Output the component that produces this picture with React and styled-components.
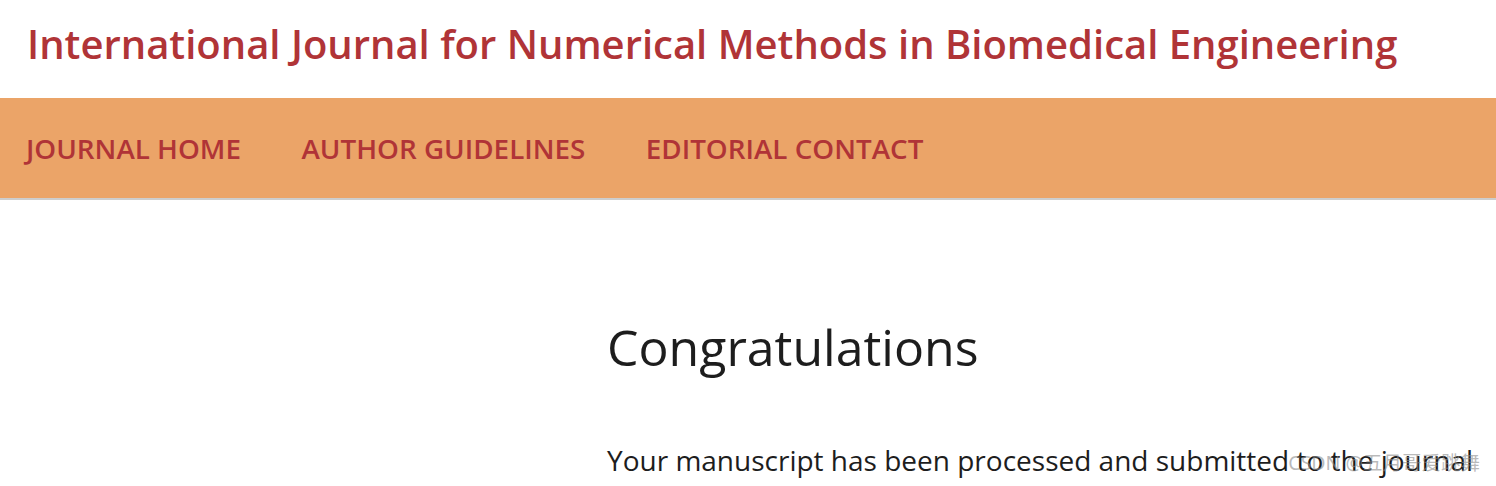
import React from 'react'
import styled, { createGlobalStyle } from 'styled-components'

const GlobalStyle = createGlobalStyle`
  html, body {
    margin: 0;
    padding: 0;
    background: #fff;
    font-family: 'Open Sans', 'Noto Sans', sans-serif;
  }
`

const Page = styled.div`
  position: relative;
  width: 1496px;
  height: 486px;
  overflow: hidden;
`

const Masthead = styled.header`
  height: 98px;
  padding: 16px 0 0 27px;
  box-sizing: border-box;
`

const Title = styled.h1`
  margin: 0;
  font-size: 40px;
  line-height: normal;
  font-weight: 600;
  color: #b03437;
  white-space: nowrap;
`

const Nav = styled.nav`
  height: 102px;
  background: #eba468;
  border-bottom: 2px solid #cdcdcd;
  box-sizing: border-box;
  display: flex;
  align-items: center;
  padding-left: 26px;
  gap: 60.5px;
`

const NavLink = styled.a`
  font-size: 27.8px;
  line-height: normal;
  font-weight: 600;
  color: #b03437;
  text-decoration: none;
  white-space: nowrap;
`

const Content = styled.main`
  padding: 113px 0 0 607px;
`

const Heading = styled.h2`
  margin: 0;
  font-size: 50px;
  font-weight: 400;
  color: #1d1d1d;
  line-height: normal;
`

const Body = styled.p`
  margin: 60px 0 0;
  font-size: 28px;
  line-height: normal;
  color: #1d1d1d;
  white-space: nowrap;
`

const Watermark = styled.span`
  position: absolute;
  right: 16px;
  bottom: 10px;
  font-size: 19.5px;
  color: rgba(140, 140, 140, 0.6);
  font-family: 'Noto Sans', 'Noto Sans CJK SC', sans-serif;
`

export default function App() {
  return (
    <Page>
      <GlobalStyle />
      <Masthead>
        <Title>International Journal for Numerical Methods in Biomedical Engineering</Title>
      </Masthead>
      <Nav>
        <NavLink>JOURNAL HOME</NavLink>
        <NavLink>AUTHOR GUIDELINES</NavLink>
        <NavLink>EDITORIAL CONTACT</NavLink>
      </Nav>
      <Content>
        <Heading>Congratulations</Heading>
        <Body>Your manuscript has been processed and submitted to the journal</Body>
      </Content>
      <Watermark>CSDN @五月哥爱跳舞</Watermark>
    </Page>
  )
}
